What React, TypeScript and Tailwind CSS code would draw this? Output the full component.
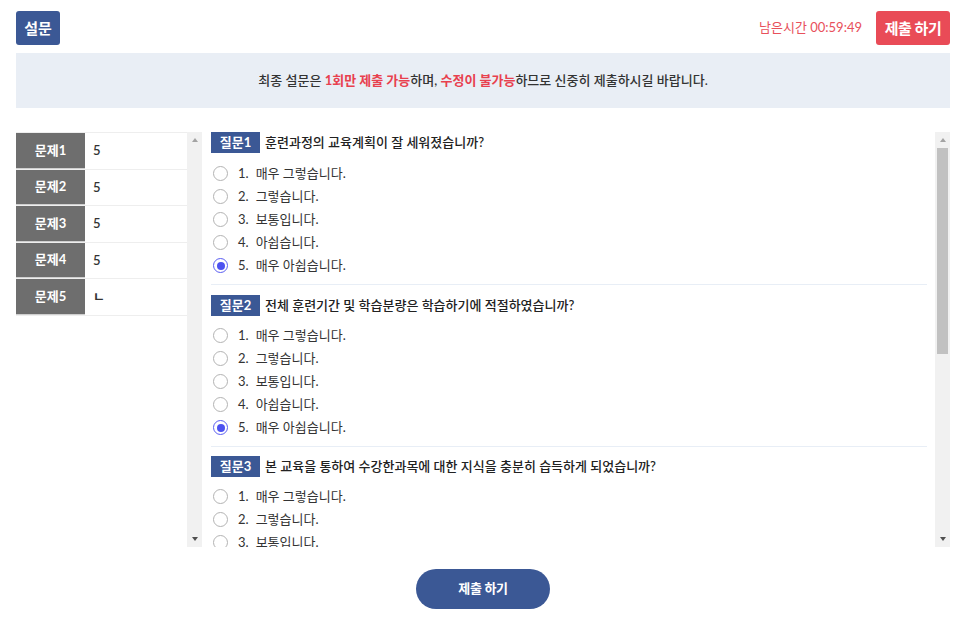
import React from "react";

const font = { fontFamily: 'Lato, "Noto Sans CJK KR", sans-serif' };

const options = ["매우 그렇습니다.", "그렇습니다.", "보통입니다.", "아쉽습니다.", "매우 아쉽습니다."];

const questions = [
  { no: 1, text: "훈련과정의 교육계획이 잘 세워졌습니까?", answer: 5 },
  { no: 2, text: "전체 훈련기간 및 학습분량은 학습하기에 적절하였습니까?", answer: 5 },
  { no: 3, text: "본 교육을 통하여 수강한과목에 대한 지식을 충분히 습득하게 되었습니까?", answer: 0 },
];

const answers = [
  { label: "문제1", value: "5" },
  { label: "문제2", value: "5" },
  { label: "문제3", value: "5" },
  { label: "문제4", value: "5" },
  { label: "문제5", value: "ㄴ" },
];

const Radio: React.FC<{ checked: boolean }> = ({ checked }) =>
  checked ? (
    <span className="flex h-[15px] w-[15px] items-center justify-center rounded-full border border-[#5b5ef2] bg-white">
      <span className="h-[8px] w-[8px] rounded-full bg-[#4d52f0]" />
    </span>
  ) : (
    <span className="h-[15px] w-[15px] rounded-full border border-[#b3b3b3] bg-white" />
  );

const ScrollTrack: React.FC<{ thumb?: boolean }> = ({ thumb }) => (
  <div className="flex h-full w-[15px] shrink-0 flex-col items-center bg-[#f1f1f1]">
    <div className="flex h-[16px] items-center justify-center">
      <span className="h-0 w-0 border-x-[3.5px] border-b-[4px] border-x-transparent border-b-[#a3a3a3]" />
    </div>
    <div className="w-full flex-1 px-[2px]">
      {thumb && <div className="h-[206px] w-full bg-[#c1c1c1]" />}
    </div>
    <div className="flex h-[16px] items-center justify-center">
      <span className="h-0 w-0 border-x-[3.5px] border-t-[4px] border-x-transparent border-t-[#505050]" />
    </div>
  </div>
);

export default function App() {
  return (
    <div className="min-h-screen bg-white px-4 text-[#333]" style={font}>
      {/* Header */}
      <header className="flex items-center justify-between pt-[11px]">
        <button className="h-[34px] w-[44px] rounded-[3px] bg-[#3b5895] text-[15px] font-semibold text-white">
          설문
        </button>
        <div className="flex items-center gap-[14px]">
          <span className="text-[13px] text-[#e8505b]">남은시간 00:59:49</span>
          <button className="h-[34px] w-[74px] rounded-[3px] bg-[#e94b57] text-[15px] font-semibold tracking-[-0.5px] text-white">
            제출 하기
          </button>
        </div>
      </header>

      {/* Notice */}
      <div className="mt-[8px] flex h-[55px] items-center justify-center bg-[#e9eef5] text-[13px] font-medium text-[#333]">
        <p>
          최종 설문은 <b className="font-bold text-[#e8404e]">1회만 제출 가능</b>하며,{" "}
          <b className="font-bold text-[#e8404e]">수정이 불가능</b>하므로 신중히 제출하시길 바랍니다.
        </p>
      </div>

      {/* Body */}
      <div className="mt-[24px] flex h-[415px] gap-[9px]">
        {/* Answer sheet */}
        <div className="flex h-full w-[186px] shrink-0">
          <div className="flex-1 overflow-hidden">
            <div className="border-t border-[#eeeeee]">
              {answers.map((a) => (
                <div key={a.label} className="flex h-[36.6px] border-b border-[#eeeeee]">
                  <div className="flex w-[69px] items-center justify-center border-b border-[#cfcfcf] bg-[#6e6e6e] text-[13px] font-bold text-white">
                    {a.label}
                  </div>
                  <div className="flex flex-1 items-center pl-[8px] text-[13px] font-semibold text-[#333]">
                    {a.value}
                  </div>
                </div>
              ))}
            </div>
          </div>
          <ScrollTrack />
        </div>

        {/* Questions */}
        <div className="flex h-full flex-1">
          <div className="flex-1 overflow-hidden pr-[8px]">
            {questions.map((q, qi) => (
              <div
                key={q.no}
                className={
                  qi === 0 ? "border-b border-[#e8eef6] pb-[7px]" : qi === 1 ? "border-b border-[#e8eef6] pt-[10px] pb-[7px]" : "pt-[9px]"
                }
              >
                <div className="flex h-[21px] items-center">
                  <span className="flex h-[21px] w-[49px] items-center justify-center bg-[#3b5895] text-[13px] font-bold text-white">
                    질문{q.no}
                  </span>
                  <span className="ml-[5px] text-[13px] font-medium text-[#222]">{q.text}</span>
                </div>
                <div className={qi === 0 ? "mt-[9px]" : "mt-[8px]"}>
                  {options.map((o, i) => (
                    <div key={o} className="flex h-[23px] items-center pl-[2px]">
                      <Radio checked={q.answer === i + 1} />
                      <span className="ml-[10px] text-[13px] text-[#333]">
                        <span className="mr-[7px]">{i + 1}.</span>
                        {o}
                      </span>
                    </div>
                  ))}
                </div>
              </div>
            ))}
          </div>
          <ScrollTrack thumb />
        </div>
      </div>

      {/* Submit */}
      <div className="mt-[22px] flex justify-center">
        <button className="h-[40px] w-[134px] rounded-full bg-[#3b5895] text-[13px] font-bold tracking-[-0.3px] text-white">
          제출 하기
        </button>
      </div>
    </div>
  );
}
